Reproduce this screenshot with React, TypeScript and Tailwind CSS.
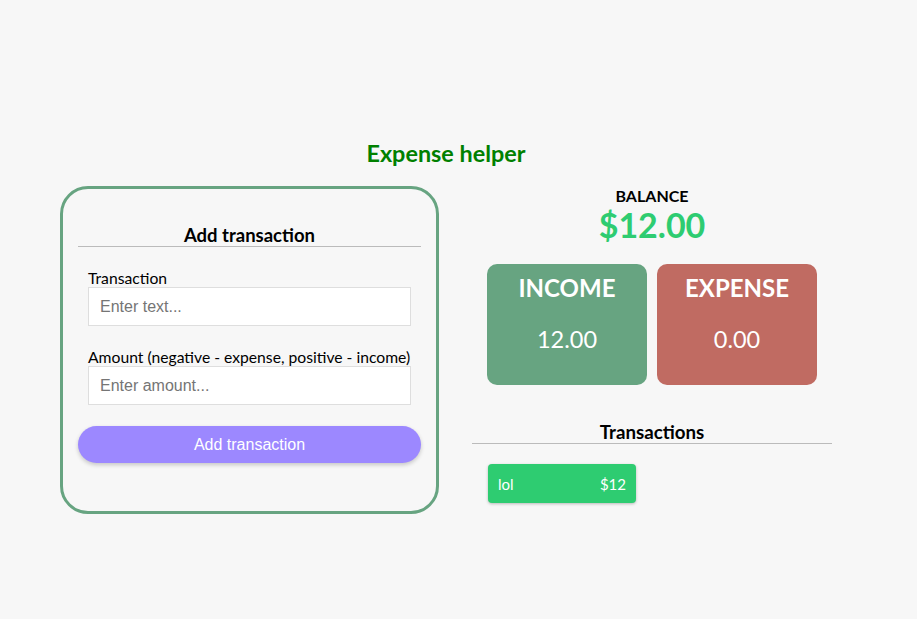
import React from "react";

const lato = { fontFamily: "Lato, 'Open Sans', sans-serif" };

function Field({ label, placeholder }: { label: string; placeholder: string }) {
  return (
    <div className="flex flex-col">
      <label className="text-[15.7px] leading-[18px] text-black">{label}</label>
      <input
        placeholder={placeholder}
        className="h-[39px] w-full border border-[#dedede] bg-white px-[11px] text-[16px] text-black outline-none placeholder:text-[#757575] [font-family:'Liberation_Sans',Arial,sans-serif]"
      />
    </div>
  );
}

export default function App() {
  return (
    <div className="min-h-[619px] w-full bg-[#f7f7f7]" style={lato}>
      <div className="ml-[60px] w-[772px] pt-[139px]">
        <h1 className="text-center text-[23.4px] font-bold leading-[29px] text-[#008000]">Expense helper</h1>
        <div className="mt-[18px] flex items-start gap-[33px]">
          {/* form card */}
          <div className="h-[328px] w-[379px] rounded-[28px] border-[3px] border-[#67a481] px-[15px] pt-[35px]">
            <h3 className="text-center text-[18.5px] font-bold leading-[22px] text-black">Add transaction</h3>
            <div className="h-px bg-[#bbbbbb]" />
            <div className="mt-[22px] flex flex-col gap-[22px] px-[10px]">
              <Field label="Transaction" placeholder="Enter text..." />
              <Field label="Amount (negative - expense, positive - income)" placeholder="Enter amount..." />
            </div>
            <button className="mt-[21px] h-[37px] w-full rounded-full bg-[#9c88ff] text-[16px] text-white shadow-[0_2px_4px_rgba(0,0,0,0.2)] [font-family:'Liberation_Sans',Arial,sans-serif]">
              Add transaction
            </button>
          </div>

          {/* summary column */}
          <div className="flex w-[360px] flex-col pt-[1px]">
            <h4 className="text-center text-[16px] font-bold leading-[18px] text-black">BALANCE</h4>
            <div className="text-center text-[34px] font-bold leading-[40px] text-[#2ecc71]">$12.00</div>
            <div className="mt-[19px] flex justify-center gap-[10px]">
              <div className="flex h-[121px] w-[160px] flex-col items-center rounded-[10px] bg-[#67a481] pt-[8px] text-white">
                <div className="text-[24px] font-bold leading-[31px]">INCOME</div>
                <div className="mt-[22px] text-[23.5px] leading-[29px]">12.00</div>
              </div>
              <div className="flex h-[121px] w-[160px] flex-col items-center rounded-[10px] bg-[#c06b62] pt-[8px] text-white">
                <div className="text-[24px] font-bold leading-[31px]">EXPENSE</div>
                <div className="mt-[22px] text-[23.5px] leading-[29px]">0.00</div>
              </div>
            </div>
            <h3 className="mt-[36px] text-center text-[18.7px] font-bold leading-[22px] text-black">Transactions</h3>
            <div className="h-px bg-[#bbbbbb]" />
            <ul className="mt-[20px] pl-[16px]">
              <li className="flex h-[39px] w-[148px] items-center justify-between rounded-[4px] bg-[#2ecc71] px-[10px] pt-[1px] text-[15px] text-white shadow-[0_1px_3px_rgba(0,0,0,0.25)]">
                <span>lol</span>
                <span>$12</span>
              </li>
            </ul>
          </div>
        </div>
      </div>
    </div>
  );
}
